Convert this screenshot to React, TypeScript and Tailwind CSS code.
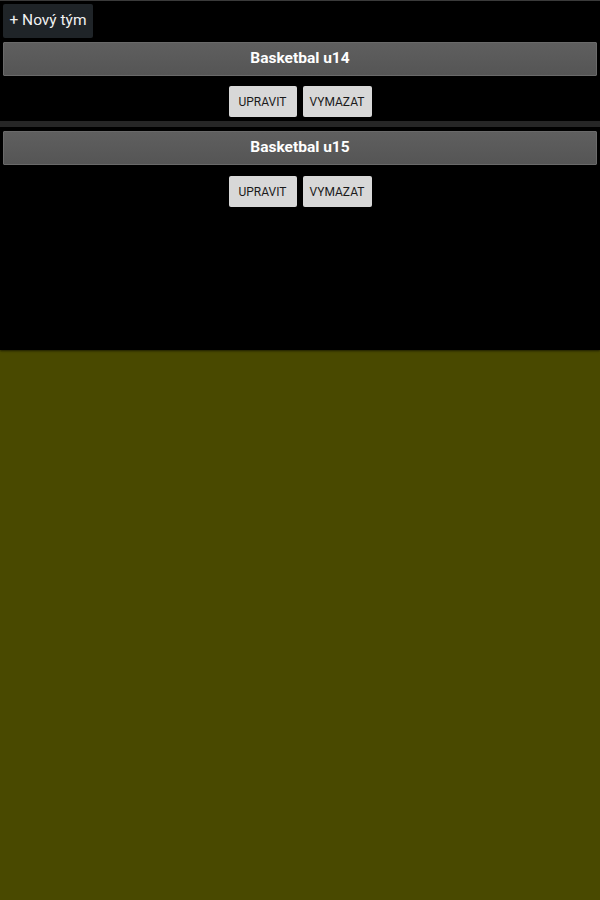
import React from "react";

const teams = ["Basketbal u14", "Basketbal u15"];

export default function App() {
  return (
    <div className="w-[600px] h-[900px] flex flex-col bg-[#494900]" style={{ fontFamily: "Roboto, 'Noto Sans', sans-serif" }}>
      <div className="h-[350px] bg-black border-t border-[#3a3a3a] flex flex-col shadow-[0_1px_2px_rgba(0,0,0,0.6)]">
        <div className="pl-[3px] pt-[3px]">
          <button className="w-[90px] h-[34px] rounded-[2px] bg-[#1f2428] text-[#f2f2f2] text-[15.5px] leading-none">
            + Nový tým
          </button>
        </div>
        {teams.map((t, i) => (
          <div key={t} className="flex flex-col">
            <div className={i === 0 ? "pt-[4px]" : ""}>
              <div className="mx-[3px] h-[34px] flex items-center justify-center rounded-[1px] border border-[#6a6a6a] bg-gradient-to-b from-[#5f5f5f] to-[#555555] text-white font-bold text-[15.5px]">
                {t}
              </div>
            </div>
            <div className={"flex justify-center gap-[6px] pb-[4px] " + (i === 0 ? "pt-[10px]" : "pt-[11px]")}>
              <button className="w-[68px] h-[31px] rounded-[2px] bg-[#d8d8d8] text-[#1a1a1a] text-[12px] font-normal">
                UPRAVIT
              </button>
              <button className="w-[69px] h-[31px] rounded-[2px] bg-[#d8d8d8] text-[#1a1a1a] text-[12px] font-normal">
                VYMAZAT
              </button>
            </div>
            {i === 0 && (
              <div className="pb-[4px]">
                <div className="h-[6px] bg-[#262626]" />
              </div>
            )}
          </div>
        ))}
      </div>
    </div>
  );
}
